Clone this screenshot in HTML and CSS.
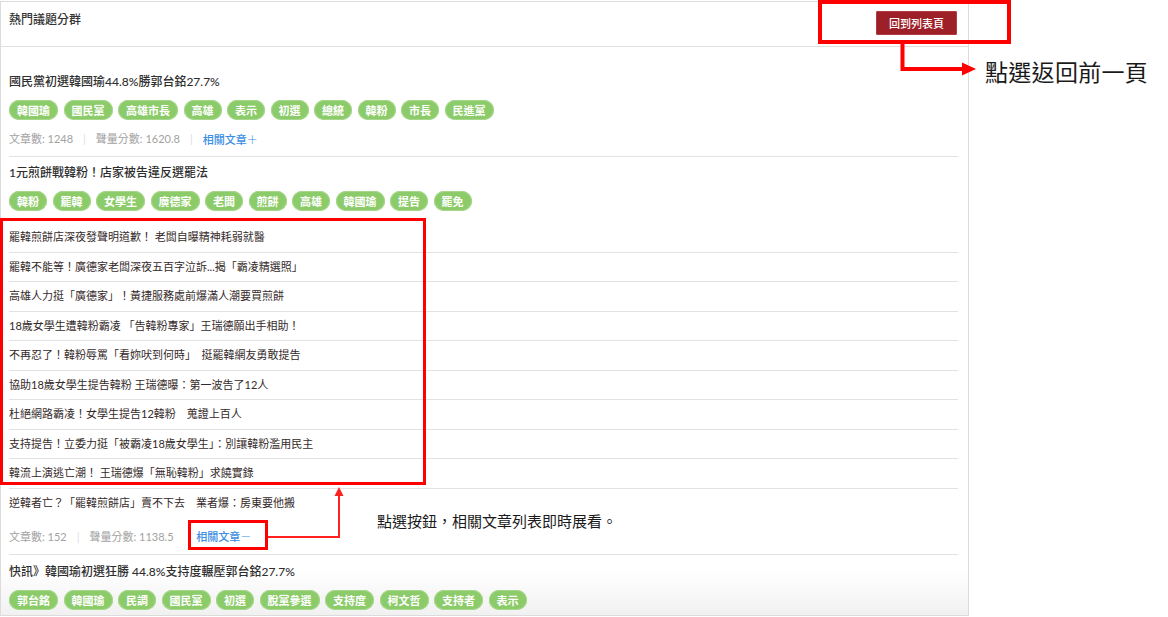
FILE: index.html
```html
<!DOCTYPE html>
<html lang="zh-Hant">
<head>
<meta charset="utf-8">
<title>熱門議題分群</title>
<link rel="stylesheet" href="styles.css">
</head>
<body>
<div class="page">
  <section class="panel">
    <header class="panel-head">
      <h1 class="panel-title">熱門議題分群</h1>
      <button class="back-btn">回到列表頁</button>
    </header>

    <div class="group group-first">
      <h2 class="group-title">國民黨初選韓國瑜44.8%勝郭台銘27.7%</h2>
      <div class="tags">
        <span class="tag">韓國瑜</span><span class="tag">國民黨</span><span class="tag">高雄市長</span><span class="tag">高雄</span><span class="tag">表示</span><span class="tag">初選</span><span class="tag">總統</span><span class="tag">韓粉</span><span class="tag">市長</span><span class="tag">民進黨</span>
      </div>
      <div class="stats">
        <span>文章數: 1248</span><span class="sep">|</span><span>聲量分數: 1620.8</span><span class="sep">|</span><a class="more">相關文章<span class="sign">＋</span></a>
      </div>
    </div>

    <div class="group">
      <h2 class="group-title">1元煎餅戰韓粉！店家被告違反選罷法</h2>
      <div class="tags">
        <span class="tag">韓粉</span><span class="tag">罷韓</span><span class="tag">女學生</span><span class="tag">廣德家</span><span class="tag">老闆</span><span class="tag">煎餅</span><span class="tag">高雄</span><span class="tag">韓國瑜</span><span class="tag">提告</span><span class="tag">罷免</span>
      </div>
      <ul class="articles">
        <li>罷韓煎餅店深夜發聲明道歉！ 老闆自曝精神耗弱就醫</li>
        <li>罷韓不能等！廣德家老闆深夜五百字泣訴...揭「霸凌精選照」</li>
        <li>高雄人力挺「廣德家」！黃捷服務處前爆滿人潮要買煎餅</li>
        <li>18歲女學生遭韓粉霸凌 「告韓粉專家」王瑞德願出手相助！</li>
        <li>不再忍了！韓粉辱罵「看妳吠到何時」　挺罷韓網友勇敢提告</li>
        <li>協助18歲女學生提告韓粉 王瑞德曝：第一波告了12人</li>
        <li>杜絕網路霸凌！女學生提告12韓粉　蒐證上百人</li>
        <li>支持提告！立委力挺「被霸凌18歲女學生」：別讓韓粉濫用民主</li>
        <li>韓流上演逃亡潮！ 王瑞德爆「無恥韓粉」求饒實錄</li>
        <li>逆韓者亡？「罷韓煎餅店」賣不下去　業者爆：房東要他搬</li>
      </ul>
      <div class="stats">
        <span>文章數: 152</span><span class="sep">|</span><span>聲量分數: 1138.5</span><span class="sep sep-hidden">|</span><a class="more">相關文章<span class="sign">－</span></a>
      </div>
    </div>

    <div class="group">
      <h2 class="group-title">快訊》韓國瑜初選狂勝 44.8%支持度輾壓郭台銘27.7%</h2>
      <div class="tags">
        <span class="tag">郭台銘</span><span class="tag">韓國瑜</span><span class="tag">民調</span><span class="tag">國民黨</span><span class="tag">初選</span><span class="tag">脫黨參選</span><span class="tag">支持度</span><span class="tag">柯文哲</span><span class="tag">支持者</span><span class="tag">表示</span>
      </div>
    </div>
  </section>

  <svg class="marks" width="1168" height="617" viewBox="0 0 1168 617" aria-hidden="true">
    <rect x="820" y="2" width="189" height="40" fill="none" stroke="#ff0000" stroke-width="4"/>
    <polyline points="902.5,44 902.5,69 964,69" fill="none" stroke="#ff0000" stroke-width="4"/>
    <polygon points="962,62.5 976,69 962,75.5" fill="#ff0000"/>

    <rect x="1.5" y="219.5" width="423" height="264" fill="none" stroke="#ff0000" stroke-width="3"/>
    <rect x="189.5" y="521.5" width="77" height="27" fill="none" stroke="#ff0000" stroke-width="3"/>
    <polyline points="268,537 339,537 339,494" fill="none" stroke="#ff2020" stroke-width="2"/>
    <polygon points="334.5,496 339,487 343.5,496" fill="#ff2020"/>
  </svg>
  <p class="note note-back">點選返回前一頁</p>
  <p class="note note-expand">點選按鈕，相關文章列表即時展看。</p>
</div>
</body>
</html>
```

FILE: styles.css
```css
* { box-sizing: border-box; }

html, body {
  margin: 0;
  padding: 0;
  background: #ffffff;
}

body {
  font-family: "Lato", "Noto Sans CJK TC", sans-serif;
  color: #333333;
  width: 1168px;
  height: 617px;
  overflow: hidden;
}

.page {
  position: relative;
  width: 1168px;
  height: 617px;
  padding-top: 1px;
}

.panel {
  width: 969px;
  height: 615px;
  border: 1px solid #dcdcdc;
  overflow: hidden;
  background: linear-gradient(to bottom, #ffffff 0, #ffffff calc(100% - 45px), #f1f1f1 100%);
}

.panel-head {
  height: 45px;
  display: flex;
  justify-content: space-between;
  align-items: flex-start;
  padding: 9px 11px 0 8px;
  border-bottom: 1px solid #e0e0e0;
}

.panel-title {
  margin: 0;
  font-size: 12px;
  font-weight: 500;
  line-height: 18px;
  color: #333333;
}

.back-btn {
  margin: 0;
  height: 24px;
  padding: 0 12px;
  border: 1px solid #b23a41;
  border-radius: 1px;
  background: #9d1f28;
  color: #ffffff;
  font-family: "Noto Sans CJK TC", sans-serif;
  font-size: 11px;
  font-weight: 500;
  line-height: 22px;
}

.group {
  margin: 0 10px 0 8px;
  padding: 7px 0 8px;
  border-bottom: 1px solid #e2e2e2;
}

.group-first {
  padding-top: 26px;
}

.group:last-child {
  border-bottom: none;
  padding-top: 8px;
}

.group-title {
  margin: 0;
  font-size: 12px;
  font-weight: 500;
  line-height: 18px;
  color: #2e2e2e;
}

.tags {
  display: flex;
  flex-wrap: wrap;
  gap: 5.5px;
  margin-top: 9px;
}

.tag {
  height: 20px;
  padding: 0 8px;
  border-radius: 10px;
  background: #8ccb69;
  box-shadow: 0 0 0 1px #a6d78b inset;
  color: #ffffff;
  font-family: "Noto Sans CJK TC", sans-serif;
  font-size: 11px;
  font-weight: 700;
  line-height: 20px;
  white-space: nowrap;
}

.stats {
  display: flex;
  align-items: center;
  margin-top: 10px;
  height: 18px;
  font-size: 11px;
  line-height: 18px;
  color: #a2a2a2;
}

.sep {
  margin: 0 10px;
  color: #dddddd;
}

.sep-hidden {
  visibility: hidden;
}

.more {
  color: #3a8ee3;
  font-weight: 500;
  cursor: pointer;
}

.sign {
  font-family: "Noto Sans CJK TC", sans-serif;
  font-weight: 300;
}

.articles {
  list-style: none;
  margin: 12px 0 0;
  padding: 0;
}

.articles li {
  height: 29.5px;
  padding: 5px 0;
  font-size: 11px;
  line-height: 18.5px;
  color: #352a2a;
  border-bottom: 1px solid #e2e2e2;
  white-space: nowrap;
}

.articles li:last-child {
  border-bottom: none;
  height: 28.5px;
}

.articles + .stats {
  margin-top: 10.5px;
}

.marks {
  position: absolute;
  left: 0;
  top: 0;
  pointer-events: none;
}

.note {
  position: absolute;
  margin: 0;
  font-family: "Noto Sans CJK TC", sans-serif;
  font-weight: 400;
  color: #1a1a1a;
  white-space: nowrap;
}

.note-back {
  left: 985px;
  top: 56px;
  font-size: 23px;
  line-height: 30px;
  letter-spacing: 0.3px;
}

.note-expand {
  left: 377px;
  top: 511px;
  font-size: 15px;
  line-height: 20px;
}
```
